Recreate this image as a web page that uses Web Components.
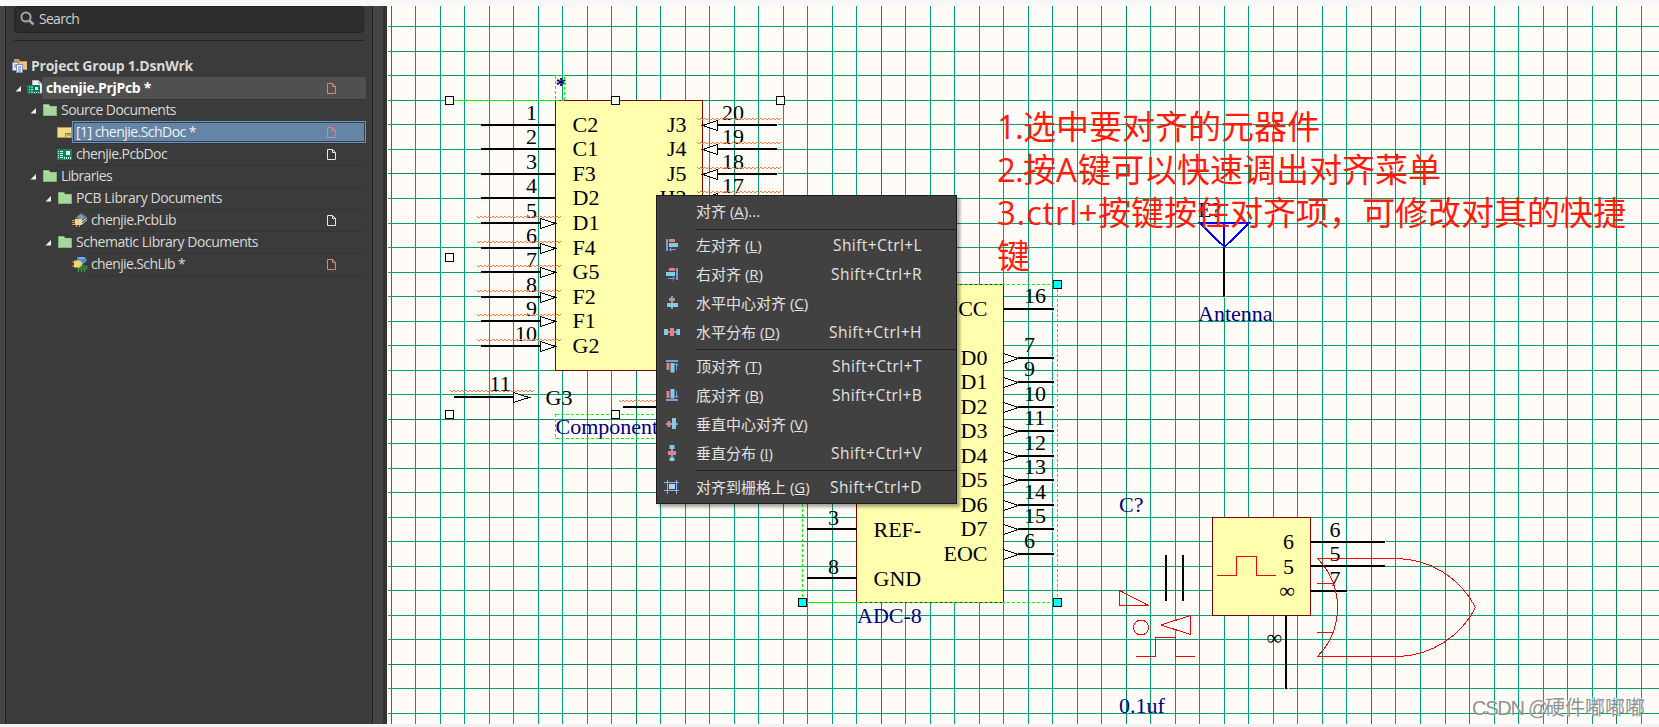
<!DOCTYPE html>
<html lang="zh-CN">
<head>
<meta charset="utf-8">
<title>chenjie.PrjPcb</title>
<style>
    html, body {
        margin: 0;
        height: 100%;
        overflow: hidden;
    }
    body {
        background: #f8f8f8;
        font-family: "Open Sans", "Noto Sans CJK SC", sans-serif;
    }
</style>
</head>
<body>
<eda-app>
    <project-panel slot="panel">
        <tree-row level="0" icon="group" width="162" bold>Project Group 1.DsnWrk</tree-row>
        <tree-row level="1" icon="project" width="105" doc="red" bold open active>chenjie.PrjPcb *</tree-row>
        <tree-row level="2" icon="folder" width="115" open>Source Documents</tree-row>
        <tree-row level="3" icon="sch" width="120" doc="red" selected>[1] chenjie.SchDoc *</tree-row>
        <tree-row level="3" icon="pcb" width="91" doc="white">chenjie.PcbDoc</tree-row>
        <tree-row level="2" icon="folder" width="51" open>Libraries</tree-row>
        <tree-row level="3" icon="folder" width="146" open>PCB Library Documents</tree-row>
        <tree-row level="4" icon="pcblib" width="85" doc="white">chenjie.PcbLib</tree-row>
        <tree-row level="3" icon="folder" width="182" open>Schematic Library Documents</tree-row>
        <tree-row level="4" icon="schlib" width="94" doc="red">chenjie.SchLib *</tree-row>
        <tree-row level="4" class="end"></tree-row>
    </project-panel>
    <schematic-sheet slot="sheet"></schematic-sheet>
    <sheet-note slot="note">
        <div><fit-text width="26">1.</fit-text>选中要对齐的元器件</div>
        <div><fit-text width="26">2.</fit-text>按<fit-text width="22">A</fit-text>键可以快速调出对齐菜单</div>
        <div><fit-text width="101">3.ctrl+</fit-text>按键按住对齐项，可修改对其的快捷</div>
        <div>键</div>
    </sheet-note>
    <align-menu slot="menu">
        <menu-item>对齐 (<u>A</u>)...</menu-item>
        <hr>
        <menu-item icon="left" keys="Shift+Ctrl+L" width="89">左对齐 (<u>L</u>)</menu-item>
        <menu-item icon="right" keys="Shift+Ctrl+R" width="91">右对齐 (<u>R</u>)</menu-item>
        <menu-item icon="hcenter">水平中心对齐 (<u>C</u>)</menu-item>
        <menu-item icon="hdist" keys="Shift+Ctrl+H" width="93">水平分布 (<u>D</u>)</menu-item>
        <hr>
        <menu-item icon="top" keys="Shift+Ctrl+T" width="90">顶对齐 (<u>T</u>)</menu-item>
        <menu-item icon="bottom" keys="Shift+Ctrl+B" width="90">底对齐 (<u>B</u>)</menu-item>
        <menu-item icon="vcenter">垂直中心对齐 (<u>V</u>)</menu-item>
        <menu-item icon="vdist" keys="Shift+Ctrl+V" width="91">垂直分布 (<u>I</u>)</menu-item>
        <hr>
        <menu-item icon="grid" keys="Shift+Ctrl+D" width="92">对齐到栅格上 (<u>G</u>)</menu-item>
    </align-menu>
    <water-mark slot="mark"><fit-text width="56">CSDN </fit-text><fit-text width="17">@</fit-text>硬件嘟嘟嘟</water-mark>
</eda-app>

<script>
// Spreads its text over a given width with letter spacing
class FitText extends HTMLElement {
    constructor() {
        super();
        this.attachShadow({ mode: 'open' });
        this.shadowRoot.innerHTML = `<style>:host { display: inline-block; white-space: pre; }</style><slot></slot>`;
    }

    connectedCallback() {
        const width = Number(this.getAttribute('width'));
        const count = this.textContent.length;
        if (!width || !count) return;
        const natural = this.getBoundingClientRect().width;
        this.style.letterSpacing = (width - natural) / count + 'px';
    }
}

const treeIcons = {
    group: `
        <path d="M2 1h5l1 2h7v9H2z" fill="#c79a55"/><path d="M3 4h12v7H3z" fill="#eec27c"/>
        <rect x=".5" y="4.500" width="6" height="8" fill="#eef2fb" stroke="#7d8db5"/>
        <rect x="4.500" y="6.500" width="6" height="8" fill="#eef2fb" stroke="#7d8db5"/>
        <path d="M6 9h3M6 11h3M6 13h3M2 7h2M2 9h2" stroke="#5f77b5"/>`,
    project: `
        <path d="M5.500.500h6l3.500 3.500v9H5.500z" fill="#f4f4f8" stroke="#b8bccb"/><path d="M11 1v3h4z" fill="#a9b0c6"/>
        <rect x="0" y="5" width="13" height="9" fill="#0b7f5a"/>
        <path d="M2 7h4M2 9.500h4M2 12h4" stroke="#d8f5e8" stroke-dasharray="1 1 3 0"/>
        <rect x="8" y="7" width="3" height="3" fill="#d8f5e8"/><path d="M7 12.500h5" stroke="#d8f5e8" stroke-dasharray="1 1"/>`,
    folder: `
        <path d="M1 2h6l1.500 2H15v10H1z" fill="#7eb576"/><path d="M2 4.500h12V13H2z" fill="#a7d69f"/>
        <path d="M2 3h4.500l1.500 2H2z" fill="#b5dcae"/>`,
    sch: `
        <rect x=".5" y="3.500" width="14" height="10" fill="#f4da82" stroke="#b8974e"/>
        <path d="M8.500 13V9.500H14M10 11h4" fill="none" stroke="#8d7336"/>`,
    pcb: `
        <rect x="0" y="3" width="15" height="11" fill="#0b8a60"/>
        <path d="M1 5.500h5M1 7.500h5M1 9.500h5M1 11.500h5" stroke="#d8f5e8" stroke-dasharray="1 1 3 0"/>
        <rect x="9" y="5" width="4" height="4" fill="#e6f7ef"/><path d="M7 12h7" stroke="#d8f5e8" stroke-width="2" stroke-dasharray="1 1"/>`,
    pcblib: `
        <path d="M3 6l6-5 6 4-5 7z" fill="#5a6f82"/><path d="M5 5l4-3 4 3-4 3z" fill="#8797a6"/>
        <path d="M9 10l6-4M10 12l5-4" stroke="#c6dce6"/>
        <rect x="3" y="7" width="7" height="6" fill="#f5d48a"/>
        <path d="M0 8.500h3M0 10.500h3M0 12.500h3M4.500 13v2M7.500 13v2" stroke="#cba35a"/>`,
    schlib: `
        <path d="M5 1h8l2 3-2 3H5z" fill="#4c8be0"/><path d="M7 2h5" stroke="#a8cbff"/><path d="M5 9h9v5H5z" fill="#2c7d35"/>
        <path d="M6.500 14v2M9.500 14v2M12.500 14v2M14 10.500h1.500M14 12.500h1.500" stroke="#48a050"/>
        <path d="M2 4.500h6l3 3-3 4H2z" fill="#f2d26b"/><path d="M0 6h2M0 10h2" stroke="#d0a840"/>`
};

class TreeRow extends HTMLElement {
    constructor() {
        super();
        this.attachShadow({ mode: 'open' });
    }

    connectedCallback() {
        const level = Number(this.getAttribute('level'));
        const icon = treeIcons[this.getAttribute('icon')] || '';
        const doc = this.getAttribute('doc');
        const color = doc === 'red' ? '#f47a7a' : '#e6e6e6';

        this.shadowRoot.innerHTML = `
            <style>
                :host {
                    display: flex;
                    height: 22px;
                    padding-left: ${6 + level * 15 - 12}px;
                    color: #d9d9d9;
                    font-size: 14px;
                    line-height: 20px;
                }
                :host([level="0"]) { padding-left: 0; }
                :host([level="0"]) .arrow { width: 6px; }
                :host([bold]) { font-weight: 700; }
                :host([active]) { color: #fff; }
                :host([selected]) { color: #f2f2f2; }
                .arrow { width: 12px; height: 22px; flex: none; }
                .icon { width: 16px; height: 16px; flex: none; margin: 3px 0 0; overflow: visible; }
                .cell {
                    flex: 1;
                    display: flex;
                    box-sizing: border-box;
                    border-top: 1px solid #343434;
                    padding: 0 30px 2px 4px;
                    align-items: center;
                    justify-content: space-between;
                    height: 22px;
                    margin-left: -1px;
                }
                :host([level="0"]) .cell { border-color: transparent; }
                :host([active]) .cell { background: #505050; border-color: #505050; }
                :host([selected]) .cell {
                    background: #6485a5;
                    border: 1px solid #6b93bd;
                    box-shadow: inset 0 0 0 1px #34424f;
                    padding: 0 29px 1px 3px;
                }
                .doc { width: 9px; height: 11px; position: relative; top: 1px; }
            </style>
            <svg class="arrow"><path d="M6 9v5.500H.500z" fill="${this.hasAttribute('open') ? '#eee' : 'none'}"/></svg>
            <svg class="icon">${icon}</svg>
            <div class="cell">
                <fit-text width="${this.getAttribute('width') || ''}">${this.textContent}</fit-text>
                ${doc ? `<svg class="doc"><path d="M.500.500h5l3 3v7h-8z M5.500.500v3h3" fill="none" stroke="${color}"/></svg>` : ''}
            </div>
        `;
    }
}

class ProjectPanel extends HTMLElement {
    constructor() {
        super();
        this.attachShadow({ mode: 'open' });
        this.shadowRoot.innerHTML = `
            <style>
                :host {
                    display: flex;
                    width: 387px;
                    background: #454545;
                    color: #d0d0d0;
                    font-size: 14px;
                }
                .edge { width: 5px; }
                .body {
                    width: 368px;
                    box-sizing: border-box;
                    border-left: 1px solid #222;
                    border-right: 1px solid #222;
                    background: #3b3b3b;
                    padding: 0 6px 0 0;
                }
                .search {
                    display: flex;
                    align-items: center;
                    gap: 4px;
                    box-sizing: border-box;
                    height: 27px;
                    margin: 0 2px 0 8px;
                    padding: 0 0 2px 5px;
                    background: #2d2d2d;
                    border: 1px solid #232323;
                    border-radius: 4px;
                }
                .rule { height: 1px; margin: 7px 2px 14px 8px; background: #222; }
                .dark { width: 4px; margin-left: auto; background: #333; }
            </style>
            <div class="edge"></div>
            <div class="body">
                <div class="search">
                    <svg width="15" height="15"><circle cx="6" cy="6" r="4.600" fill="none" stroke="#a5a5a5" stroke-width="2"/><path d="M9.500 9.500l4 4" stroke="#a5a5a5" stroke-width="2.500"/></svg>
                    <fit-text width="40">Search</fit-text>
                </div>
                <div class="rule"></div>
                <slot></slot>
            </div>
            <div class="dark"></div>
        `;
    }
}

const blue = '#85cbe6';
const red = '#e57f80';
const bar = '#7b9fdb';
const menuIcons = {
    left: `<path d="M3 2v12" stroke="${bar}" stroke-width="2"/><path d="M5 3.500h6" stroke="${red}" stroke-width="3"/>
        <path d="M5 8h9" stroke="${blue}" stroke-width="4"/><path d="M12 12.500H5.500M7.500 10.500l-2 2 2 2" fill="none" stroke="${bar}"/>`,
    right: `<path d="M13 2v12" stroke="${bar}" stroke-width="2"/><path d="M5 3.500h6" stroke="${red}" stroke-width="3"/>
        <path d="M2 8h9" stroke="${blue}" stroke-width="4"/><path d="M4 12.500h6.500M8.500 10.500l2 2-2 2" fill="none" stroke="${bar}"/>`,
    hcenter: `<path d="M8 1v13" stroke="${bar}" stroke-width="2"/><path d="M5 4.500h6" stroke="${red}" stroke-width="3"/>
        <path d="M3 10h11" stroke="${blue}" stroke-width="4"/>`,
    hdist: `<path d="M0 8h16" stroke="${bar}" stroke-width="2"/><path d="M0 8h4M12.500 8h3.500" stroke="${blue}" stroke-width="6"/>
        <path d="M6 8h4" stroke="${red}" stroke-width="8"/>`,
    top: `<path d="M2 3h12" stroke="${bar}" stroke-width="2"/><path d="M4 5v7" stroke="${red}" stroke-width="3"/>
        <path d="M8.500 5v9.500" stroke="${blue}" stroke-width="4"/><path d="M12.500 12V5.500M10.500 7.500l2-2 2 2" fill="none" stroke="${bar}"/>`,
    bottom: `<path d="M2 13h12" stroke="${bar}" stroke-width="2"/><path d="M4 4v7" stroke="${red}" stroke-width="3"/>
        <path d="M8.500 2v9.500" stroke="${blue}" stroke-width="4"/><path d="M12.500 4v6.500M10.500 8.500l2 2 2-2" fill="none" stroke="${bar}"/>`,
    vcenter: `<path d="M2 8h12" stroke="${bar}" stroke-width="2"/><path d="M5 5v6" stroke="${red}" stroke-width="3"/>
        <path d="M10 2v11" stroke="${blue}" stroke-width="4"/>`,
    vdist: `<path d="M8 0v16" stroke="${bar}" stroke-width="2"/><path d="M8 0v4M8 12.500v3.500" stroke="${blue}" stroke-width="5"/>
        <path d="M8 6v4" stroke="${red}" stroke-width="8"/>`,
    grid: `<path d="M3.500 1v14M12.500 1v14M0 3.500h15M0 11.500h15" stroke="#8db4e8"/><rect x="5" y="5" width="6" height="5" fill="#a9d8ee"/>`
};

class MenuItem extends HTMLElement {
    constructor() {
        super();
        this.attachShadow({ mode: 'open' });
    }

    connectedCallback() {
        this.shadowRoot.innerHTML = `
            <style>
                :host {
                    display: flex;
                    align-items: center;
                    box-sizing: border-box;
                    height: 29.1px;
                    padding: 0 34px 2px 7px;
                    line-height: 20px;
                }
                svg { width: 16px; height: 16px; margin-right: 16px; flex: none; }
                .keys { margin-left: auto; font-size: 15.5px; }
            </style>
            <svg>${menuIcons[this.getAttribute('icon')] || ''}</svg>
            <span><slot></slot></span>
            <fit-text class="keys" width="${this.getAttribute('width') || ''}">${this.getAttribute('keys') || ''}</fit-text>
        `;
    }
}

class AlignMenu extends HTMLElement {
    constructor() {
        super();
        this.attachShadow({ mode: 'open' });
        this.shadowRoot.innerHTML = `
            <style>
                :host {
                    display: block;
                    position: absolute;
                    left: 656px;
                    top: 195px;
                    width: 301px;
                    height: 309px;
                    box-sizing: border-box;
                    border: 1px solid #1d1d1d;
                    background: #414141;
                    color: #e2e2e2;
                    font-size: 15px;
                    padding-top: 1px;
                    box-shadow: 3px 3px 3px rgba(0, 0, 0, 0.35);
                }
                ::slotted(hr) {
                    height: 1px;
                    border: none;
                    margin: 1.5px 0 2px 39px;
                    background: #222;
                }
                ::slotted(menu-item:first-child) { margin-bottom: 2.5px; }
            </style>
            <slot></slot>
        `;
    }
}

class SheetNote extends HTMLElement {
    constructor() {
        super();
        this.attachShadow({ mode: 'open' });
        this.shadowRoot.innerHTML = `
            <style>
                :host {
                    display: block;
                    position: absolute;
                    left: 997px;
                    top: 105px;
                    color: #ff1c0c;
                    font-size: 33px;
                    line-height: 43px;
                    white-space: nowrap;
                }
                ::slotted(div) { height: 43px; }
            </style>
            <slot></slot>
        `;
    }
}

class WaterMark extends HTMLElement {
    constructor() {
        super();
        this.attachShadow({ mode: 'open' });
        this.shadowRoot.innerHTML = `
            <style>
                :host {
                    display: block;
                    position: absolute;
                    right: 14px;
                    top: 695px;
                    color: #929292;
                    font: 20px/26px "Liberation Sans", "Noto Sans CJK SC", sans-serif;
                    text-shadow: -1px -1px 0 rgba(255, 255, 255, 0.8);
                    white-space: nowrap;
                }
            </style>
            <slot></slot>
        `;
    }
}

// Helpers for the drawing; every coordinate is in window pixels
const text = (x, y, value, anchor = 'start', color = '#000') =>
    `<text x="${x}" y="${y}" text-anchor="${anchor}" fill="${color}">${value}</text>`;

const wire = (x1, y1, x2, y2) =>
    `<path d="M${x1} ${y1}L${x2} ${y2}" stroke="#000" stroke-width="2"/>`;

const tip = (x, y) =>
    `<path d="M${x - 2} ${y - 2}l5 5m0 -5l-5 5" stroke="#e1e9f3" fill="none"/>`;

const arrow = (x1, x2, y) =>
    `<path d="M${x1 + 0.5} ${y - 4.5}V${y + 5.5}L${x2} ${y + 0.5}z" fill="#f7faff" stroke="#000"/>`;

const wave = (x1, x2, y) => {
    let d = `M${x1} ${y}`;
    for (let x = x1, i = 0; x < x2; x += 2, i++) {
        d += `l2 ${i % 2 ? -2 : 2}`;
    }
    return `<path d="${d}" fill="none" stroke="#ff7d3c"/>`;
};

const handle = (x, y, fill) =>
    `<rect x="${x - 3.5}" y="${y - 3.5}" width="8" height="8" fill="${fill}" stroke="#000"/>`;

class SchematicSheet extends HTMLElement {
    constructor() {
        super();
        this.attachShadow({ mode: 'open' });
    }

    connectedCallback() {
        this.shadowRoot.innerHTML = `
            <style>
                :host { display: block; flex: 1; background: #fffcf7; border-left: 1px solid #fff; }
                svg { display: block; width: 100%; height: 100%; }
                text { font-family: "Liberation Serif", serif; font-size: 22px; }
            </style>
            <svg viewBox="388 6 1271 718" shape-rendering="crispEdges">
                ${this.grid()}
                ${this.component()}
                ${this.adc()}
                ${this.antenna()}
                ${this.parts()}
            </svg>
        `;
    }

    grid() {
        let out = '';
        for (let n = 0; n < 52; n++) {
            const x = Math.floor(391.08 + 24.51 * n);
            out += `<rect x="${x}" y="6" width="1" height="718" fill="${n % 10 ? '#00a070' : '#008c5a'}"/>`;
        }
        for (let n = 0; n < 29; n++) {
            const y = Math.floor(26.93 + 24.51 * n);
            out += `<rect x="388" y="${y}" width="1271" height="1" fill="${n % 10 === 6 ? '#008c5a' : '#00a070'}"/>`;
        }
        return out;
    }

    component() {
        const left = ['C2', 'C1', 'F3', 'D2', 'D1', 'F4', 'G5', 'F2', 'F1', 'G2'];
        const right = ['J3', 'J4', 'J5', 'H2'];
        let out = '<rect x="555.5" y="100.5" width="147" height="270" fill="#ffffae" stroke="#800000"/>';

        left.forEach((name, i) => {
            const y = Math.round(124.9 + 24.53 * i);
            out += tip(483, y) + wire(481, y, 555, y);
            out += text(537, y - 5.5, i + 1, 'end') + text(572.5, y + 6.5, name);
            if (i > 3) out += arrow(540, 555, y) + wave(477, 561, y - 7);
        });
        right.forEach((name, i) => {
            const y = Math.round(124.9 + 24.53 * i);
            out += tip(776, y) + wire(718, y, 777, y) + arrow(717, 703, y);
            out += text(722, y - 5.5, 20 - i) + text(686.5, y + 6.5, name, 'end') + wave(697, 781, y - 7);
        });

        out += tip(455, 397) + wire(454, 397, 513, 397) + arrow(513, 529, 397) + wave(450, 534, 390);
        out += text(489.5, 391, '11') + text(545.5, 404.5, 'G3');
        out += wire(623, 407, 700, 407) + wave(619, 700, 400);
        out += text(555.5, 434, 'Component', 'start', '#000080');
        out += `<g font-weight="700">${text(555.5, 92, '*', 'start', '#000080')}</g>`;
        out += `<g fill="none" stroke="#00ff00">
            <path d="M453 100.500H555" stroke-dasharray="6 1"/>
            <path d="M555.500 75.500h9v25h-9z" stroke-dasharray="3 2"/>
            <path d="M555.500 414.500H700M555.500 438.500H700M555.500 414v25" stroke-dasharray="3 2"/>
        </g>`;
        [[449, 100], [615, 100], [780, 100], [449, 257], [449, 414], [615, 414]].forEach(([x, y]) => {
            out += handle(x, y, '#fff');
        });
        return out;
    }

    adc() {
        const pins = [['D0', 7], ['D1', 9], ['D2', 10], ['D3', 11], ['D4', 12], ['D5', 13], ['D6', 14], ['D7', 15], ['EOC', 6]];
        let out = '<rect x="856.5" y="284.5" width="147" height="318" fill="#ffffae" stroke="#800000"/>';

        out += tip(1054, 309) + wire(1003, 309, 1054, 309) + text(1024, 303, '16') + text(987.5, 315.5, 'VCC', 'end');
        pins.forEach(([name, number], i) => {
            const y = Math.round(357.9 + 24.5 * i);
            out += tip(1054, y) + wire(1018, y, 1054, y);
            out += `<path d="M1003.500 ${y - 4.5}V${y + 5.5}L1018 ${y + 0.5}z" fill="#f7faff"/>`;
            out += `<path d="M1003.500 ${y - 4.5}L1018 ${y + 0.5}L1003.500 ${y + 5.5}" fill="none" stroke="#000"/>`;
            out += text(1024, y - 6, number) + text(987.5, y + 6.500, name, 'end');
        });
        out += wire(807, 529, 857, 529) + text(828, 524.5, '3') + text(873.5, 537, 'REF-');
        out += wire(807, 578, 857, 578) + text(828, 573.5, '8') + text(873.5, 586, 'GND');
        out += text(857, 623, 'ADC-8', 'start', '#000080');
        out += `<g fill="none" stroke="#00ff00">
            <path d="M1003.500 284V602" stroke="#800000"/>
            <path d="M802.500 284V602M802 284.500H1057M857 602.500H1057M1057.500 284V602" stroke-dasharray="3 2"/>
            <path d="M802 602.500H857"/>
        </g>`;
        return out + handle(1057, 284, '#0ff') + handle(802, 602, '#0ff') + handle(1057, 602, '#0ff');
    }

    antenna() {
        return text(1198, 217, 'E?', 'start', '#000080') + text(1198, 321, 'Antenna', 'start', '#000080')
            + tip(1224, 297) + wire(1224, 247, 1224, 297)
            + '<path d="M1200 223H1249L1224.500 247zM1224 223V247" fill="none" stroke="#00f" stroke-width="2"/>';
    }

    parts() {
        return `
            ${text(1119, 512, 'C?', 'start', '#000080')}
            ${text(1119, 713, '0.1uf', 'start', '#000080')}
            ${wire(1166, 555, 1166, 601)}${wire(1183, 555, 1183, 601)}
            <rect x="1212.5" y="517.5" width="98" height="98" fill="#ffffae" stroke="#800000"/>
            ${tip(1384, 542)}${tip(1384, 566)}${tip(1347, 591)}${tip(1286, 690)}
            ${wire(1310, 542, 1385, 542)}${wire(1310, 566, 1385, 566)}${wire(1310, 591, 1347, 591)}${wire(1286, 615, 1286, 689)}
            ${text(1329.5, 537, '6')}${text(1329.5, 561, '5')}${text(1329.5, 585.5, '7')}
            ${text(1294, 549, '6', 'end')}${text(1294, 573.5, '5', 'end')}${text(1295, 598, '∞', 'end')}
            ${text(1266.5, 644.5, '∞')}
            <g fill="none" stroke="#f00">
                <path d="M1119.500 590.500V605.500H1148.500z"/>
                <circle cx="1141" cy="627.5" r="7.5"/>
                <path d="M1161 625L1190.500 615.500V634.500z" fill="#f7faff"/>
                <path d="M1136 656.500H1155.500V637.500H1175.500V656.500H1195"/>
                <path d="M1217 575.500H1236.500V556.500H1256.500V575.500H1276"/>
                <path d="M1317.500 558.500H1395.500A90 90 0 0 1 1475.500 607.500A90 90 0 0 1 1400 656.500H1317.500A70 70 0 0 0 1317.500 558.500z"/>
                <path d="M1317 583.500H1333M1317 632.500H1333"/>
            </g>
        `;
    }
}

class EdaApp extends HTMLElement {
    constructor() {
        super();
        this.attachShadow({ mode: 'open' });
        this.shadowRoot.innerHTML = `
            <style>
                :host {
                    display: flex;
                    position: relative;
                    box-sizing: border-box;
                    width: 1659px;
                    height: 727px;
                    padding: 6px 0 3px;
                    background: linear-gradient(#f8f8f8 50%, #f1f1f1 50%);
                    overflow: hidden;
                }
            </style>
            <slot name="panel"></slot>
            <slot name="sheet"></slot>
            <slot name="note"></slot>
            <slot name="menu"></slot>
            <slot name="mark"></slot>
        `;
    }
}

customElements.define('eda-app', EdaApp);
customElements.define('project-panel', ProjectPanel);
customElements.define('tree-row', TreeRow);
customElements.define('schematic-sheet', SchematicSheet);
customElements.define('sheet-note', SheetNote);
customElements.define('align-menu', AlignMenu);
customElements.define('menu-item', MenuItem);
customElements.define('water-mark', WaterMark);
// last, because it measures text in the font its parents set
customElements.define('fit-text', FitText);
</script>
</body>
</html>
